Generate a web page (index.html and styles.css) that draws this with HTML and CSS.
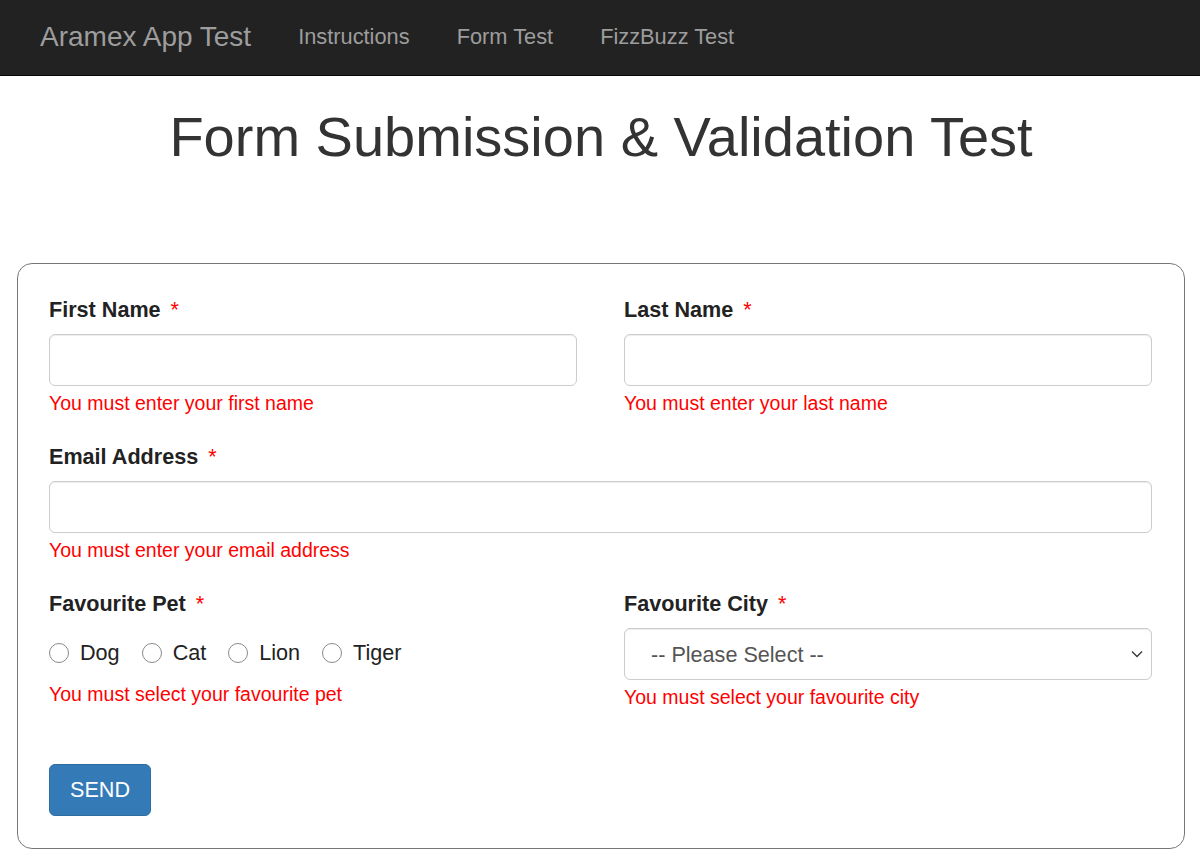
FILE: index.html
```html
<!DOCTYPE html>
<html lang="en">
<head>
<meta charset="utf-8">
<title>Form Submission &amp; Validation Test</title>
<link rel="stylesheet" href="styles.css">
</head>
<body>
<nav class="navbar">
  <a class="brand" href="#">Aramex App Test</a>
  <a class="nav-link" href="#">Instructions</a>
  <a class="nav-link" href="#">Form Test</a>
  <a class="nav-link" href="#">FizzBuzz Test</a>
</nav>
<main class="page">
  <h1 class="title">Form Submission &amp; Validation Test</h1>
  <form class="card">
    <div class="grid">
      <div class="group">
        <label class="label">First Name <span class="req">*</span></label>
        <input class="control" type="text">
        <div class="error">You must enter your first name</div>
      </div>
      <div class="group">
        <label class="label">Last Name <span class="req">*</span></label>
        <input class="control" type="text">
        <div class="error">You must enter your last name</div>
      </div>
      <div class="group span2">
        <label class="label">Email Address <span class="req">*</span></label>
        <input class="control" type="text">
        <div class="error">You must enter your email address</div>
      </div>
      <div class="group">
        <label class="label">Favourite Pet <span class="req">*</span></label>
        <div class="radios">
          <label class="radio"><input type="radio" name="pet"><span>Dog</span></label>
          <label class="radio"><input type="radio" name="pet"><span>Cat</span></label>
          <label class="radio"><input type="radio" name="pet"><span>Lion</span></label>
          <label class="radio"><input type="radio" name="pet"><span>Tiger</span></label>
        </div>
        <div class="error pet-error">You must select your favourite pet</div>
      </div>
      <div class="group">
        <label class="label">Favourite City <span class="req">*</span></label>
        <div class="select-wrap">
          <select class="control select">
            <option>-- Please Select --</option>
          </select>
          <svg class="chevron" width="12" height="8" viewBox="0 0 12 8"><path d="M1 1.5 L6 6.5 L11 1.5" fill="none" stroke="#333" stroke-width="1.3"/></svg>
        </div>
        <div class="error">You must select your favourite city</div>
      </div>
    </div>
    <div class="actions">
      <button type="button" class="btn">SEND</button>
    </div>
  </form>
</main>
</body>
</html>
```

FILE: styles.css
```css
* { box-sizing: border-box; }

body {
  margin: 0;
  font-family: "Liberation Sans", Arial, Helvetica, sans-serif;
  color: #333;
  background: #fff;
}

.navbar {
  height: 76px;
  background: #222;
  border-bottom: 1px solid #080808;
  display: flex;
  align-items: center;
  padding: 0 0 1px 40px;
  gap: 47px;
}

.navbar a {
  color: #9d9d9d;
  text-decoration: none;
}

.brand {
  font-size: 28px;
  line-height: 30px;
}

.nav-link {
  font-size: 21.8px;
  line-height: 30px;
}

.page {
  padding: 0 15px 0 17px;
}

.title {
  margin: 31px 0 96px;
  font-size: 56px;
  line-height: 60px;
  font-weight: 400;
  text-align: center;
  color: #333;
}

.card {
  border: 1px solid #777;
  border-radius: 15px;
  padding: 31px 32px 32px 31px;
}

.grid {
  display: grid;
  grid-template-columns: 1fr 1fr;
  column-gap: 47px;
  row-gap: 25px;
}

.span2 { grid-column: span 2; }

.label {
  display: block;
  font-size: 21.6px;
  line-height: 30px;
  font-weight: 700;
  color: #222;
  margin-bottom: 9px;
}

.req {
  color: #f00;
  font-weight: 400;
  margin-left: 4px;
}

.control {
  display: block;
  width: 100%;
  height: 52px;
  border: 1px solid #ccc;
  border-radius: 6px;
  box-shadow: inset 0 1px 1px rgba(0,0,0,.075);
  background: #fff;
  font-family: inherit;
  font-size: 21.6px;
  color: #555;
  padding: 0 18px;
}

.select-wrap {
  position: relative;
}

.select {
  appearance: none;
  -webkit-appearance: none;
  padding-left: 26px;
}

.chevron {
  position: absolute;
  right: 9px;
  top: 22px;
}

.error {
  margin-top: 3px;
  font-size: 19.5px;
  line-height: 28px;
  color: #f00;
}

.radios {
  display: flex;
  align-items: center;
  height: 50px;
  margin-top: 1px;
  gap: 22px;
}

.radio {
  display: flex;
  align-items: center;
  gap: 11px;
  font-size: 21.6px;
  color: #222;
}

.radio input {
  appearance: none;
  -webkit-appearance: none;
  margin: 0;
  width: 20px;
  height: 20px;
  border: 1px solid #8a8a8a;
  border-radius: 50%;
  background: #fff;
}

.pet-error { margin-top: 2px; }

.actions {
  margin-top: 53px;
}

.btn {
  height: 52px;
  padding: 0 20px;
  background: #337ab7;
  border: 1px solid #2e6da4;
  border-radius: 6px;
  color: #fff;
  font-family: inherit;
  font-size: 21.6px;
  cursor: pointer;
}
```
